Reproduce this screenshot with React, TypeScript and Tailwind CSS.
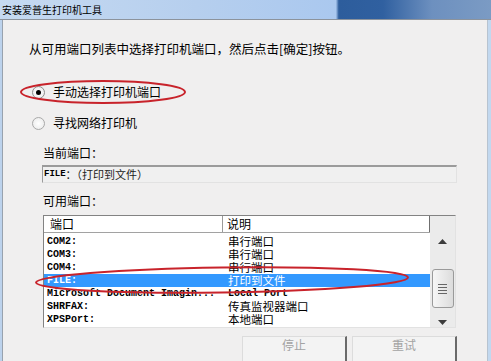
import React from "react";

type Port = { name: string; desc: string; selected?: boolean; serif?: boolean };

const ports: Port[] = [
  { name: "COM2:", desc: "串行端口" },
  { name: "COM3:", desc: "串行端口" },
  { name: "COM4:", desc: "串行端口" },
  { name: "FILE:", desc: "打印到文件", selected: true },
  { name: "Microsoft Document Imagin...", desc: "Local Port", serif: true },
  { name: "SHRFAX:", desc: "传真监视器端口" },
  { name: "XPSPort:", desc: "本地端口" },
];

const mono = "font-['Liberation_Mono',monospace]";

const Radio: React.FC<{ checked?: boolean }> = ({ checked }) => (
  <div
    className={`w-[13px] h-[13px] rounded-full border bg-[radial-gradient(circle,#ffffff_0%,#e8e8e8_100%)] flex items-center justify-center shrink-0 ${checked ? "border-[#8e8e8e]" : "border-[#a9a9a9]"}`}
  >
    {checked && <div className="w-[5px] h-[5px] rounded-full bg-black" />}
  </div>
);

const App: React.FC = () => {
  return (
    <div className="relative w-[491px] h-[361px] overflow-hidden bg-[#f0efef] text-black font-['Noto_Sans_CJK_SC',sans-serif]">
      {/* Title bar */}
      <div className="h-[20px] flex items-center pl-[2px] text-[10px] leading-none border-b border-[#8c939c] bg-[linear-gradient(90deg,#c6daf1_0%,#b6cfee_40%,#aac8ef_68.4%,#2d5d9c_69%,#3060a0_78%,#6d90bf_88%,#7b9bc4_100%)]">
        安装爱普生打印机工具
      </div>

      <div className="flex h-[341px]">
        <div className="w-[3px] bg-[#bcd2ec] border-r border-[#98a2ae]" />

        <div className="flex-1 flex flex-col">
          {/* Instruction */}
          <div className="mt-[21px] ml-[26px] h-[16px] leading-[16px] text-[12.5px]">
            从可用端口列表中选择打印机端口，然后点击[确定]按钮。
          </div>

          {/* Radios */}
          <div className="mt-[27px] ml-[29px] h-[16px] flex items-center gap-[8px] text-[12px]">
            <Radio checked />
            <span>手动选择打印机端口</span>
          </div>
          <div className="mt-[15px] ml-[29px] h-[16px] flex items-center gap-[8px] text-[12px]">
            <Radio />
            <span>寻找网络打印机</span>
          </div>

          {/* Current port */}
          <div className="mt-[14px] ml-[40px] h-[16px] leading-[16px] text-[12px]">当前端口：</div>
          <div className="mt-[4px] ml-[39px] w-[415px] h-[18px] flex items-center pl-[1px] bg-[#f0f0f0] border-t-2 border-l border-[#9b9b9b] border-r border-b border-r-[#e2e2e2] border-b-[#e2e2e2]">
            <span className={`${mono} text-[9px] font-bold`}>FILE</span>
            <span className="text-[11px] text-[#222]">：（打印到文件）</span>
          </div>

          {/* Available ports */}
          <div className="mt-[10px] ml-[40px] h-[16px] leading-[16px] text-[12px]">可用端口：</div>
          <div className="mt-[6px] ml-[40px] w-[413px] h-[120px] flex bg-white border-t border-l border-[#838383] border-r border-b border-r-[#e2e2e2] border-b-[#e2e2e2]">
            <div className="w-[386px] flex flex-col">
              <div className="h-[17px] flex border-b border-[#a2a2a2] text-[12px] leading-[16px]">
                <div className="w-[179px] pl-[6px] border-r border-[#9a9a9a]">端口</div>
                <div className="flex-1 pl-[4px] border-r border-[#6f6f6f]">说明</div>
              </div>
              <div className="pt-[2px]">
                {ports.map((p) => (
                  <div
                    key={p.name}
                    className={`h-[13px] flex items-center ${p.selected ? "bg-[#3399ff] text-white" : "text-black"}`}
                  >
                    <div className={`w-[180px] pl-[3px] ${mono} text-[10px] font-bold leading-[13px] whitespace-nowrap`}>
                      {p.name}
                    </div>
                    <div
                      className={`pl-[4px] h-[13px] leading-[13px] whitespace-nowrap ${p.serif ? `${mono} text-[10px] font-bold` : "text-[11.5px]"}`}
                    >
                      {p.desc}
                    </div>
                  </div>
                ))}
              </div>
            </div>

            {/* Scrollbar */}
            <div className="flex-1 bg-[#ebebeb] flex flex-col items-center">
              <div className="h-[17px] w-full" />
              <div className="h-[16px] flex items-center justify-center">
                <svg width="9" height="5" viewBox="0 0 9 5">
                  <path d="M0 5 L4.5 0 L9 5 Z" fill="#3c3c3c" />
                </svg>
              </div>
              <div className="mt-[20px] w-[22px] h-[39px] rounded-[3px] border border-[#9a9a9a] bg-[linear-gradient(90deg,#f6f6f6,#dcdcdc)] flex flex-col items-center justify-center gap-[2px]">
                <div className="w-[9px] h-[1px] bg-[#666]" />
                <div className="w-[9px] h-[1px] bg-[#666]" />
                <div className="w-[9px] h-[1px] bg-[#666]" />
                <div className="w-[9px] h-[1px] bg-[#666]" />
              </div>
              <div className="mt-[9px] h-[10px] flex items-center justify-center">
                <svg width="9" height="5" viewBox="0 0 9 5">
                  <path d="M0 0 L4.5 5 L9 0 Z" fill="#3c3c3c" />
                </svg>
              </div>
            </div>
          </div>

          {/* Buttons */}
          <div className="mt-[8px] ml-[239px] flex gap-[5px]">
            <div className="w-[105px] h-[25px] flex justify-center text-[12px] leading-[16px] text-[#a3a3a3] bg-[#f3f3f3] border-t border-l border-[#dcdcdc] border-r-2 border-r-[#6a6a6a]">
              停止
            </div>
            <div className="w-[105px] h-[25px] flex justify-center text-[12px] leading-[16px] text-[#a3a3a3] bg-[#f3f3f3] border-t border-l border-[#dcdcdc] border-r-2 border-r-[#6a6a6a]">
              重试
            </div>
          </div>
        </div>

        <div className="w-[4px] bg-[#c2d8ef] border-l border-[#b7c3d0]" />
      </div>

      {/* Red annotation ellipses */}
      <svg className="absolute left-0 top-0 pointer-events-none" width="491" height="361">
        <ellipse cx="103" cy="92" rx="82" ry="11" fill="none" stroke="#c8232b" strokeWidth="2" />
        <ellipse
          cx="222"
          cy="280"
          rx="186"
          ry="12.5"
          fill="none"
          stroke="#c8232b"
          strokeWidth="2"
          transform="rotate(-0.8 222 280)"
        />
      </svg>
    </div>
  );
};

export default App;
